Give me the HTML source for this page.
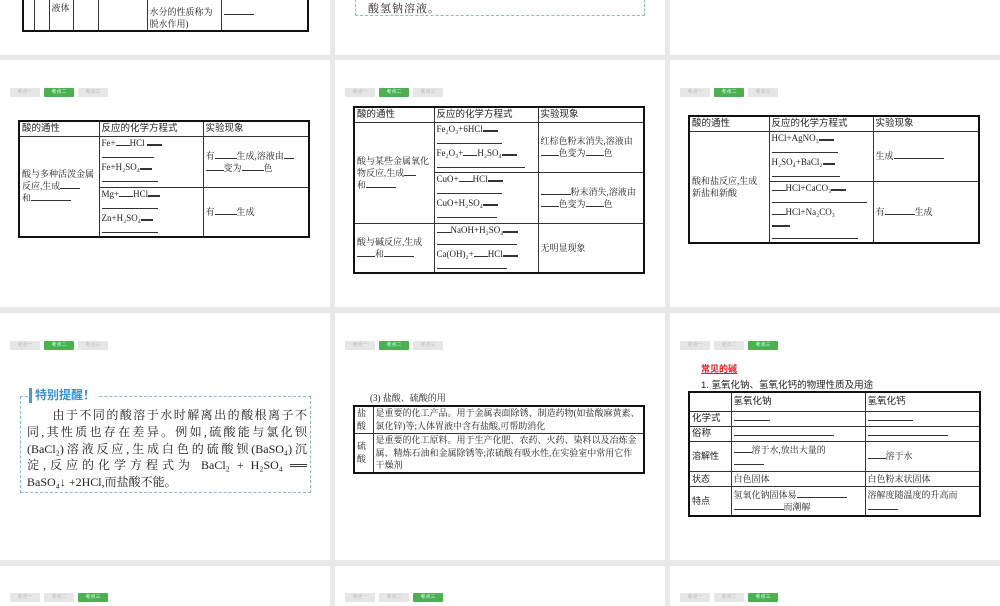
<!DOCTYPE html>
<html><head><meta charset="utf-8"><style>
*{margin:0;padding:0;box-sizing:border-box}
body{width:1000px;height:600px;background:#e8e8e8;position:relative;overflow:hidden;font-family:"Liberation Serif","Noto Serif CJK SC","Noto Sans CJK SC",serif;color:#222}
.p{position:absolute;background:#fff}
.a{position:absolute}
.tab{position:absolute;width:30px;height:9px;background:#e6e6e6;color:#bbb;font-size:5px;text-align:center;line-height:9px;border-radius:1px;font-family:"Liberation Sans","Noto Sans CJK SC",sans-serif}
.tab.g{background:#4caf50;color:#dff}
table{position:absolute;border-collapse:collapse;border:2px solid #111;font-size:9px;line-height:12px}
td{border:1px solid #333;vertical-align:middle;padding:0 2px}
.h td{font-family:"Liberation Sans","Noto Sans CJK SC",sans-serif;font-size:9.5px}
td.t{vertical-align:top}
u{text-decoration:none;border-bottom:1px solid #333;display:inline-block}
.jl{display:block;text-align:justify;text-align-last:justify;white-space:nowrap}
</style></head><body>

<div class="p" style="left:0;top:0;width:330px;height:55px">
<table style="left:22px;top:-20px;width:287px;height:52px">
<tr><td style="width:11px"></td><td style="width:15px"></td><td style="width:24px;vertical-align:top;padding-top:20px">液体</td><td style="width:25px"></td><td style="width:49px"></td><td style="width:74px;font-size:9px;line-height:12px;vertical-align:bottom">水分的性质称为<br>脱水作用)</td><td style="vertical-align:top;padding-top:24px"><u style="width:30px"></u></td></tr>
</table></div>
<div class="p" style="left:335px;top:0;width:330px;height:55px">
<div class="a" style="left:20px;top:-5px;width:290px;height:21px;border:1px dashed #8bc;border-top:none"></div>
<div class="a" style="left:33px;top:0px;font-size:11px;letter-spacing:1px">酸氢钠溶液。</div>
</div>
<div class="p" style="left:670px;top:0;width:330px;height:55px"></div>

<div class="p" style="left:0;top:60px;width:330px;height:247px">
<div class="tab" style="left:10px;top:28px">考点一</div><div class="tab g" style="left:44px;top:28px">考点二</div><div class="tab" style="left:78px;top:28px">考点三</div>
<table style="left:18px;top:60px;width:292px;height:118px">
<tr class="h" style="height:15px"><td style="width:80px">酸的通性</td><td style="width:104px">反应的化学方程式</td><td>实验现象</td></tr>
<tr style="height:51px"><td rowspan="2">酸与多种活泼金属反应,生成<u style="width:20px"></u><br>和<u style="width:40px"></u></td><td class="t">Fe+<u style="width:14px"></u>HCl <u style="width:15px;border-width:2px"></u><br><u style="width:52px"></u><br>Fe+H₂SO₄<u style="width:12px;border-width:2px"></u><br><u style="width:56px"></u></td><td>有<u style="width:22px"></u>生成,溶液由<u style="width:10px"></u><br><u style="width:18px"></u>变为<u style="width:22px"></u>色</td></tr>
<tr><td class="t">Mg+<u style="width:14px"></u>HCl<u style="width:12px;border-width:2px"></u><br><u style="width:56px"></u><br>Zn+H₂SO₄<u style="width:12px;border-width:2px"></u><br><u style="width:56px"></u></td><td>有<u style="width:22px"></u>生成</td></tr>
</table></div>

<div class="p" style="left:335px;top:60px;width:330px;height:247px">
<div class="tab" style="left:10px;top:28px">考点一</div><div class="tab g" style="left:44px;top:28px">考点二</div><div class="tab" style="left:78px;top:28px">考点三</div>
<table style="left:18px;top:46px;width:292px;height:166px">
<tr class="h" style="height:15px"><td style="width:80px">酸的通性</td><td style="width:104px">反应的化学方程式</td><td>实验现象</td></tr>
<tr style="height:50px"><td rowspan="2">酸与某些金属氧化物反应,生成<u style="width:12px"></u><br>和<u style="width:30px"></u></td><td class="t">Fe₂O₃+6HCl<u style="width:15px;border-width:2px"></u><br><u style="width:65px"></u><br>Fe₂O₃+<u style="width:14px"></u>H₂SO₄<u style="width:15px;border-width:2px"></u><br><u style="width:88px"></u></td><td>红棕色粉末消失,溶液由<br><u style="width:18px"></u>色变为<u style="width:18px"></u>色</td></tr>
<tr style="height:51px"><td class="t">CuO+<u style="width:14px"></u>HCl<u style="width:15px;border-width:2px"></u><br><u style="width:65px"></u><br>CuO+H₂SO₄<u style="width:15px;border-width:2px"></u><br><u style="width:60px"></u></td><td><u style="width:30px"></u>粉末消失,溶液由<br><u style="width:18px"></u>色变为<u style="width:18px"></u>色</td></tr>
<tr><td>酸与碱反应,生成<br><u style="width:18px"></u>和<u style="width:30px"></u></td><td class="t"><u style="width:14px"></u>NaOH+H₂SO₄<u style="width:15px;border-width:2px"></u><br><u style="width:80px"></u><br>Ca(OH)₂+<u style="width:14px"></u>HCl<u style="width:15px;border-width:2px"></u><br><u style="width:70px"></u></td><td>无明显现象</td></tr>
</table></div>

<div class="p" style="left:670px;top:60px;width:330px;height:247px">
<div class="tab" style="left:10px;top:28px">考点一</div><div class="tab g" style="left:44px;top:28px">考点二</div><div class="tab" style="left:78px;top:28px">考点三</div>
<table style="left:18px;top:55px;width:292px;height:128px">
<tr class="h" style="height:15px"><td style="width:80px">酸的通性</td><td style="width:104px">反应的化学方程式</td><td>实验现象</td></tr>
<tr style="height:50px"><td rowspan="2">酸和盐反应,生成<br>新盐和新酸</td><td class="t">HCl+AgNO₃<u style="width:15px;border-width:2px"></u><br><u style="width:66px"></u><br>H₂SO₄+BaCl₂<u style="width:12px;border-width:2px"></u><br><u style="width:68px"></u></td><td>生成<u style="width:50px"></u></td></tr>
<tr><td class="t"><u style="width:14px"></u>HCl+CaCO₃<u style="width:15px;border-width:2px"></u><br><u style="width:95px"></u><br><u style="width:14px"></u>HCl+Na₂CO₃<br><u style="width:18px;border-width:2px"></u><br><u style="width:86px"></u></td><td>有<u style="width:30px"></u>生成</td></tr>
</table></div>

<div class="p" style="left:0;top:313px;width:330px;height:247px">
<div class="tab" style="left:10px;top:28px">考点一</div><div class="tab g" style="left:44px;top:28px">考点二</div><div class="tab" style="left:78px;top:28px">考点三</div>
<div class="a" style="left:20px;top:83px;width:291px;height:97px;border:1px dashed #8bc"></div>
<div class="a" style="left:29px;top:75px;background:#fff;padding:0 2px 0 3px;border-left:3px solid #3aa0d8;color:#3a8fd0;font-size:12px;font-weight:bold;font-family:'Liberation Sans','Noto Sans CJK SC',sans-serif;line-height:15px">特别提醒！</div>
<div class="a" style="left:27px;top:94px;width:280px;font-size:12px;line-height:16.8px">
<span class="jl">&emsp;&emsp;由于不同的酸溶于水时解离出的酸根离子不</span>
<span class="jl">同,其性质也存在差异。例如,硫酸能与氯化钡</span>
<span class="jl">(BaCl₂)溶液反应,生成白色的硫酸钡(BaSO₄)沉</span>
<span class="jl">淀,反应的化学方程式为 BaCl₂ + H₂SO₄ ══</span>
<span style="display:block">BaSO₄↓ +2HCl,而盐酸不能。</span>
</div>
</div>

<div class="p" style="left:335px;top:313px;width:330px;height:247px">
<div class="tab" style="left:10px;top:28px">考点一</div><div class="tab g" style="left:44px;top:28px">考点二</div><div class="tab" style="left:78px;top:28px">考点三</div>
<div class="a" style="left:35px;top:78px;font-size:9px">(3) 盐酸、硫酸的用</div>
<table style="left:18px;top:92px;width:292px;height:69px;font-size:9px;line-height:12.5px">
<tr><td style="width:19px">盐<br>酸</td><td>是重要的化工产品。用于金属表面除锈、制造药物(如盐酸麻黄素、氯化锌)等;人体胃液中含有盐酸,可帮助消化</td></tr>
<tr><td>硫<br>酸</td><td>是重要的化工原料。用于生产化肥、农药、火药、染料以及冶炼金属、精炼石油和金属除锈等;浓硫酸有吸水性,在实验室中常用它作干燥剂</td></tr>
</table></div>

<div class="p" style="left:670px;top:313px;width:330px;height:247px">
<div class="tab" style="left:10px;top:28px">考点一</div><div class="tab" style="left:44px;top:28px">考点二</div><div class="tab g" style="left:78px;top:28px">考点三</div>
<div class="a" style="left:31px;top:49px;font-size:9px;color:#e02020;text-decoration:underline;font-weight:bold;font-family:'Liberation Sans','Noto Sans CJK SC',sans-serif">常见的碱</div>
<div class="a" style="left:31px;top:64px;font-size:9.5px;font-family:'Liberation Sans','Noto Sans CJK SC',sans-serif">1. 氢氧化钠、氢氧化钙的物理性质及用途</div>
<table style="left:18px;top:78px;width:293px;height:126px">
<tr class="h" style="height:19px"><td style="width:42px"></td><td style="width:134px">氢氧化钠</td><td>氢氧化钙</td></tr>
<tr class="h" style="height:15px"><td>化学式</td><td><u style="width:36px"></u></td><td><u style="width:45px"></u></td></tr>
<tr class="h" style="height:15px"><td>俗称</td><td><u style="width:100px"></u></td><td><u style="width:80px"></u></td></tr>
<tr style="height:30px"><td style="font-family:'Liberation Sans','Noto Sans CJK SC',sans-serif">溶解性</td><td><u style="width:18px"></u>溶于水,放出大量的<br><u style="width:30px"></u></td><td><u style="width:18px"></u>溶于水</td></tr>
<tr style="height:15px"><td style="font-family:'Liberation Sans','Noto Sans CJK SC',sans-serif">状态</td><td>白色固体</td><td>白色粉末状固体</td></tr>
<tr><td style="font-family:'Liberation Sans','Noto Sans CJK SC',sans-serif">特点</td><td>氢氧化钠固体易<u style="width:50px"></u><br><u style="width:50px"></u>而潮解</td><td>溶解度随温度的升高而<br><u style="width:30px"></u></td></tr>
</table></div>

<div class="p" style="left:0;top:566px;width:330px;height:40px">
<div class="tab" style="left:10px;top:27px">考点一</div><div class="tab" style="left:44px;top:27px">考点二</div><div class="tab g" style="left:78px;top:27px">考点三</div></div>
<div class="p" style="left:335px;top:566px;width:330px;height:40px">
<div class="tab" style="left:10px;top:27px">考点一</div><div class="tab" style="left:44px;top:27px">考点二</div><div class="tab g" style="left:78px;top:27px">考点三</div></div>
<div class="p" style="left:670px;top:566px;width:330px;height:40px">
<div class="tab" style="left:10px;top:27px">考点一</div><div class="tab" style="left:44px;top:27px">考点二</div><div class="tab g" style="left:78px;top:27px">考点三</div></div>
</body></html>
